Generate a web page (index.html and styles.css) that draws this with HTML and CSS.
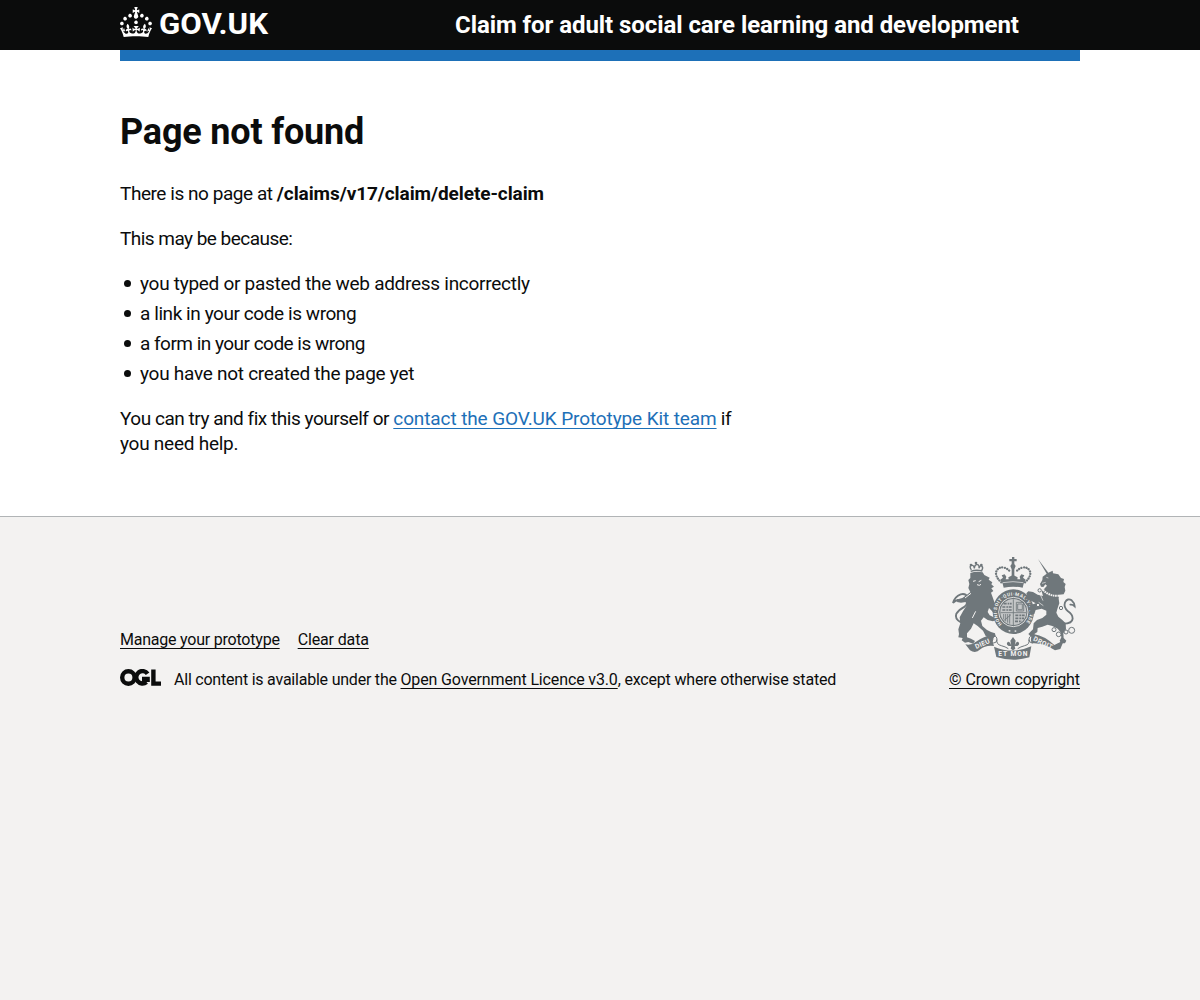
FILE: index.html
```html
<!DOCTYPE html>
<html lang="en">
<head>
<meta charset="utf-8">
<title>Page not found</title>
<link rel="stylesheet" href="styles.css">
</head>
<body>
<header class="header">
  <div class="container header-inner">
    <svg class="logo" width="150" height="32" viewBox="0 0 150 32" fill="#fff" role="img" aria-label="GOV.UK">
      <path d="M22.6 10.4c-1 .4-2-.1-2.4-1-.4-.9.1-2 1-2.4.9-.4 2 .1 2.4 1s-.1 2-1 2.4m-5.9 6.7c-.9.4-2-.1-2.4-1-.4-.9.1-2 1-2.4.9-.4 2 .1 2.4 1s-.1 2-1 2.4m10.8-3.7c-1 .4-2-.1-2.4-1-.4-.9.1-2 1-2.4.9-.4 2 .1 2.4 1s0 2-1 2.4m3.3 4.8c-1 .4-2-.1-2.4-1-.4-.9.1-2 1-2.4.9-.4 2 .1 2.4 1s-.1 2-1 2.4M17 4.7l2.3 1.2V2.5l-2.3.7-.2-.2.9-3h-3.4l.9 3-.2.2c-.1.1-2.3-.7-2.3-.7v3.4L15 4.7c.1.1.1.2.2.2l-1.3 4c-.1.2-.1.4-.1.6 0 1.1.8 2 1.9 2.2h.7c1-.2 1.9-1.1 1.9-2.1 0-.2 0-.4-.1-.6l-1.3-4c-.1-.2 0-.2.1-.3m-7.6 5.7c.9.4 2-.1 2.4-1 .4-.9-.1-2-1-2.4-.9-.4-2 .1-2.4 1s0 2 1 2.4m-5 3c.9.4 2-.1 2.4-1 .4-.9-.1-2-1-2.4-.9-.4-2 .1-2.4 1s.1 2 1 2.4m-3.2 4.8c.9.4 2-.1 2.4-1 .4-.9-.1-2-1-2.4-.9-.4-2 .1-2.4 1s0 2 1 2.4m14.8 11c4.4 0 8.6.3 12.3.8 1.1-4.5 2.4-7 3.7-8.8l-2.5-.9c.2 1.3.3 1.9 0 2.7-.4-.4-.8-1.1-1.1-2.3l-1.2 4c.7-.5 1.3-.8 2-.9-1.1 2.5-2.6 3.1-3.5 3-1.1-.2-1.7-1.2-1.5-2.1.3-1.2 1.5-1.5 2.1-.1 1.1-2.3-.8-3-2-2.3 1.9-1.9 2.1-3.5.6-5.6-2.1 1.6-2.1 3.2-1.2 5.5-1.2-1.4-3.2-.6-2.5 1.6.9-1.4 2.1-.5 1.9.8-.2 1.1-1.7 2.1-3.5 1.9-2.7-.2-2.9-2.1-2.9-3.6.7-.1 1.9.5 2.9 1.9l.4-4.3c-1.1 1.1-2.1 1.4-3.2 1.4.4-1.2 2.1-3 2.1-3h-5.4s1.7 1.9 2.1 3c-1.1 0-2.1-.2-3.2-1.4l.4 4.3c1-1.4 2.2-2 2.9-1.9-.1 1.5-.2 3.4-2.9 3.6-1.9.2-3.4-.8-3.5-1.9-.2-1.3 1-2.2 1.9-.8.7-2.3-1.2-3-2.5-1.6.9-2.2.9-3.9-1.2-5.5-1.5 2-1.3 3.7.6 5.6-1.2-.7-3.1 0-2 2.3.6-1.4 1.8-1.1 2.1.1.2.9-.3 1.9-1.5 2.1-.9.2-2.4-.5-3.5-3 .6 0 1.2.3 2 .9l-1.2-4c-.3 1.1-.7 1.9-1.1 2.3-.3-.8-.2-1.4 0-2.7l-2.9.9C1.3 23 2.6 25.5 3.7 30c3.7-.5 7.9-.8 12.3-.8"/>
      <text class="logo-text" x="39" y="26.6" textLength="109" lengthAdjust="spacingAndGlyphs">GOV.UK</text>
    </svg>
    <span class="service">Claim for adult social care learning and development</span>
  </div>
</header>
<div class="container bar"></div>
<main class="container main">
  <h1>Page not found</h1>
  <p><span class="l1">There is no page at </span><strong>/claims/v17/claim/delete-claim</strong></p>
  <p class="l2">This may be because:</p>
  <ul>
    <li class="l3">you typed or pasted the web address incorrectly</li>
    <li class="l4">a link in your code is wrong</li>
    <li class="l5">a form in your code is wrong</li>
    <li class="l6">you have not created the page yet</li>
  </ul>
  <p><span class="l7">You can try and fix this yourself or </span><a class="l8" href="#">contact the GOV.UK Prototype Kit team</a><span class="l7"> if</span><br><span class="l9">you need help.</span></p>
</main>
<footer class="footer">
  <div class="container footer-inner">
    <div class="meta">
      <div class="links"><a class="f1" href="#">Manage your prototype</a><a class="f2" href="#">Clear data</a></div>
      <div class="licence">
        <svg class="ogl" width="41" height="17" viewBox="0 0 41 17" fill="none" stroke="#0b0c0c" stroke-width="4.4" aria-label="OGL">
          <circle cx="8.4" cy="8.5" r="6.2"/>
          <path d="M27.6 4.8A6.2 6.2 0 1 0 26.5 13M22 10H27.6V13M33.4 .5V14.6H41"/>
        </svg>
        <span class="licence-text"><span class="f3">All content is available under the </span><a class="f4" href="#">Open Government Licence v3.0</a><span class="f5">, except where otherwise stated</span></span>
      </div>
    </div>
    <div class="crown">
      <svg class="arms" width="130" height="106" viewBox="15 9 390 318" fill="#6f777b" aria-hidden="true">
        <defs>
          <path id="ring" d="M171 216A49.5 49.5 0 1 1 239 216"/>
        </defs>
        <!-- lion -->
        <path d="M76 63Q94 57 113 61L118 69 134 77 131 83 142 91 139 97 147 104 139 109 145 117 138 122 143 136 148 150 154 168 158 184 150 188 140 176 132 168 128 180 134 190 146 196 152 204 144 208 128 204 116 196 108 206 112 222 126 234 138 240 150 244 152 254 134 257 122 252 114 236 98 222 86 214 78 230 66 244 66 256 78 260 90 267 84 275 70 270 60 272 50 265 53 258 40 256 42 246 40 232 46 214 44 196 54 178 64 162 62 150 48 152 36 150 38 142 52 138 64 130 76 120 70 108 73 96 70 84 76 78Z"/>
        <path fill="none" stroke="#6f777b" stroke-width="5.5" stroke-linecap="round" d="M48 211q-20-9-14-26 7-11 25-21 12-11 9-27-5-14-21-10-18 7-23 26 6-7 14-9"/>
        <path fill="none" stroke="#f3f2f1" stroke-width="3" d="M84 88l8-2M101 89l8-4M96 98l7 2 5-3M78 124l-18 14M92 178l-10 20"/>
        <path fill="none" stroke="#6f777b" stroke-width="4" d="M77 58q17-6 35-1M79 54q-9-15 4-14 4 1 5 9 2-13 8-11 7-1 6 11 4-10 8-7 6 5 0 13"/>
        <circle cx="93" cy="33" r="4"/><circle cx="78" cy="39" r="4"/><circle cx="109" cy="39" r="4"/>
        <!-- royal crown -->
        <path d="M201 15h7v6h7v7h-7v8l4 6-4 10v34h-8V52l-4-10 4-6v-8h-7v-7h8Z"/>
        <path fill="none" stroke="#6f777b" stroke-width="7" stroke-linecap="round" stroke-dasharray=".1 7.5" d="M169 91q-20-18-15-33 7-15 24-11 13 4 18 14M240 91q20-18 15-33-7-15-24-11-13 4-18 14"/>
        <path d="M166 83l8-6-4-7 9-3 5 7-2 8 9 0-1-6 14-7 14 7-1 6 9 0-2-8 5-7 9 3-4 7 8 6-6 12-3 12q-29-6-57 0l-3-12Z"/>
        <path fill="none" stroke="#f3f2f1" stroke-width="2" d="M173 92q31-6 62 0"/>
        <!-- garter and shield -->
        <ellipse cx="205" cy="179" rx="62" ry="67"/>
        <circle cx="205" cy="180" r="44" fill="none" stroke="#f3f2f1" stroke-width="2.5"/>
        <text class="motto"><textPath href="#ring" textLength="228">HONI·SOIT·QUI·MAL·Y·PENSE</textPath></text>
        <circle cx="205" cy="180" r="39" fill="#f3f2f1" fill-opacity=".65"/>
        <path fill="none" stroke="#6f777b" stroke-width="5" stroke-dasharray="9 3 5 2" d="M176 155h24M172 165h28M172 174h28M211 190h31M211 199h26M210 208h20"/>
        <path fill="none" stroke="#6f777b" stroke-width="2.5" d="M205 142v77M167 182h76M214 151h22v26h-22ZM218 156h14v17h-14ZM176 186v16M182 186v22M188 186v26M194 186v29M176 206l22-18"/>
        <path fill="none" stroke="#f3f2f1" stroke-width="4" stroke-dasharray="5 13" d="M191 236q16 4 32-2"/>
        <!-- unicorn -->
        <path d="M279 21L310 62 323 56 324 64 340 67 348 78 357 81 355 90 362 96 359 105 361 116 356 127 342 128 341 140 343 154 338 168 334 182 340 194 352 204 362 214 363 232 355 244 356 258 364 266 360 274 348 274 344 266 349 256 346 240 338 230 322 222 308 218 292 224 278 228 277 240 268 246 270 254 258 254 250 246 258 238 264 232 266 214 276 204 292 198 304 188 304 176 290 170 272 174 268 186 260 190 252 182 256 174 252 166 260 158 272 154 258 146 248 136 244 124 250 118 264 120 278 128 294 132 290 118 298 110 306 101 301 97 295 105 288 104 285 96 292 84 293 74 305 65Z"/>
        <path fill="none" stroke="#6f777b" stroke-width="5.5" stroke-linecap="round" d="M355 215q27 0 28-15 0-13-14-22-14-12-9-27 8-14 20-6 9 8 9 18-6-6-13-5"/>
        <path fill="none" stroke="#f3f2f1" stroke-width="6" stroke-dasharray="5 2" d="M294 113q17 21 51 18"/>
        <path fill="none" stroke="#f3f2f1" stroke-width="2" d="M291 94l11-3M304 76l6 2M286 128l8 18M281 151l14 10"/>
        <g fill="#f3f2f1" stroke="#6f777b" stroke-width="3">
          <circle cx="284" cy="115" r="5"/><circle cx="279" cy="159" r="5"/><circle cx="348" cy="168" r="5"/><circle cx="327" cy="233" r="6"/><circle cx="341" cy="247" r="7"/><circle cx="363" cy="240" r="6"/><circle cx="380" cy="235" r="9"/>
        </g>
        <!-- plants and ribbon -->
        <path d="M204 255l8 11-3 15q5-14 11-11 6 7-3 12h-8l2 8-7 5-7-5 2-8h-8q-9-5-3-12 6-3 11 11l-3-15Z"/>
        <path fill="none" stroke="#6f777b" stroke-width="3" d="M137 251q17-4 19 10 0 12-10 12-9-3-2-11M156 263q-3 14 13 18 12 3 21 9M271 251q-17-4-19 10 0 12 10 12 9-3 2-11M251 263q5 14-12 18-12 3-21 9"/>
        <path d="M61 277q15 5 32-8 24-17 48-21l8 4-7 14 5 16q-26-3-41 10-14 14-31 3ZM147 284q57 24 112-1l-6 33q-48 15-99-1ZM260 274q-7-21 8-27 29 4 60 32l18-9 10-3-10 24-16 4q-35-24-70-21Z"/>
        <g class="ribbon">
          <text x="94" y="291" transform="rotate(-24 94 291)" textLength="46">DIEU</text>
          <text x="160" y="313" textLength="87">ET MON</text>
          <text x="263" y="265" transform="rotate(26 263 265)" textLength="62">DROIT</text>
        </g>
      </svg>
      <a class="f6" href="#">© Crown copyright</a>
    </div>
  </div>
</footer>
</body>
</html>
```
FILE: styles.css
```css
* { box-sizing: border-box; }
html { background: #f3f2f1; }
body { margin: 0; background: #fff; color: #0b0c0c; font: 19px/25px Roboto, "Liberation Sans", sans-serif; }
.container { width: 960px; margin: 0 auto; }
.header { height: 50px; background: #0b0c0c; color: #fff; }
.header-inner { display: flex; height: 50px; }
.logo { margin: 7px 185px 0 0; flex: none; overflow: visible; }
.logo-text { font: 700 29px Roboto, sans-serif; }
.service { font-size: 24px; font-weight: 700; line-height: 50px; letter-spacing: -.07px; white-space: nowrap; }
.bar { height: 11px; background: #1d70b8; }
.main { padding-top: 51px; height: 455px; }
h1 { margin: 0 0 29px; font-size: 36px; line-height: 40px; font-weight: 700; letter-spacing: -.18px; }
p { margin: 0 0 20px; white-space: pre-wrap; }
strong { letter-spacing: -.08px; }
ul { margin: 0 0 20px; padding: 0 0 0 4px; list-style: none; }
li { display: flex; align-items: center; gap: 9px; margin-bottom: 5px; }
li::before { content: ""; width: 7px; height: 7px; border-radius: 50%; background: #0b0c0c; }
.l1 { letter-spacing: -.45px; }
.l2 { letter-spacing: -.53px; }
.l3 { letter-spacing: -.28px; }
.l4 { letter-spacing: -.43px; }
.l5 { letter-spacing: -.52px; }
.l6 { letter-spacing: -.27px; }
.l7 { letter-spacing: -.47px; }
.l8 { letter-spacing: -.11px; }
.l9 { letter-spacing: -.25px; }
.f1 { letter-spacing: -.22px; }
.f2 { letter-spacing: -.14px; }
.f3 { letter-spacing: -.22px; }
.f4 { letter-spacing: -.14px; }
.f5 { letter-spacing: -.19px; }
.f6 { letter-spacing: -.09px; }
.main a { color: #1d70b8; }
a { color: #0b0c0c; text-decoration: underline; text-decoration-thickness: 1px; text-underline-offset: 3px; text-decoration-skip-ink: none; }
.footer { background: #f3f2f1; border-top: 1px solid #b1b4b6; min-height: 484px; padding-top: 38px; font-size: 16px; line-height: 20px; }
.footer-inner { display: flex; justify-content: space-between; align-items: flex-end; }
.links { display: flex; gap: 18px; margin-bottom: 20px; }
.licence { display: flex; }
.ogl { margin: -1px 13px 0 0; }
.licence-text { white-space: pre; }
.crown { display: flex; flex-direction: column; align-items: flex-end; }
.arms { margin-bottom: 9px; }
.motto { font: 700 14px Roboto, sans-serif; fill: #f3f2f1; }
.ribbon { font: 700 20px Roboto, sans-serif; fill: #f3f2f1; }
```
